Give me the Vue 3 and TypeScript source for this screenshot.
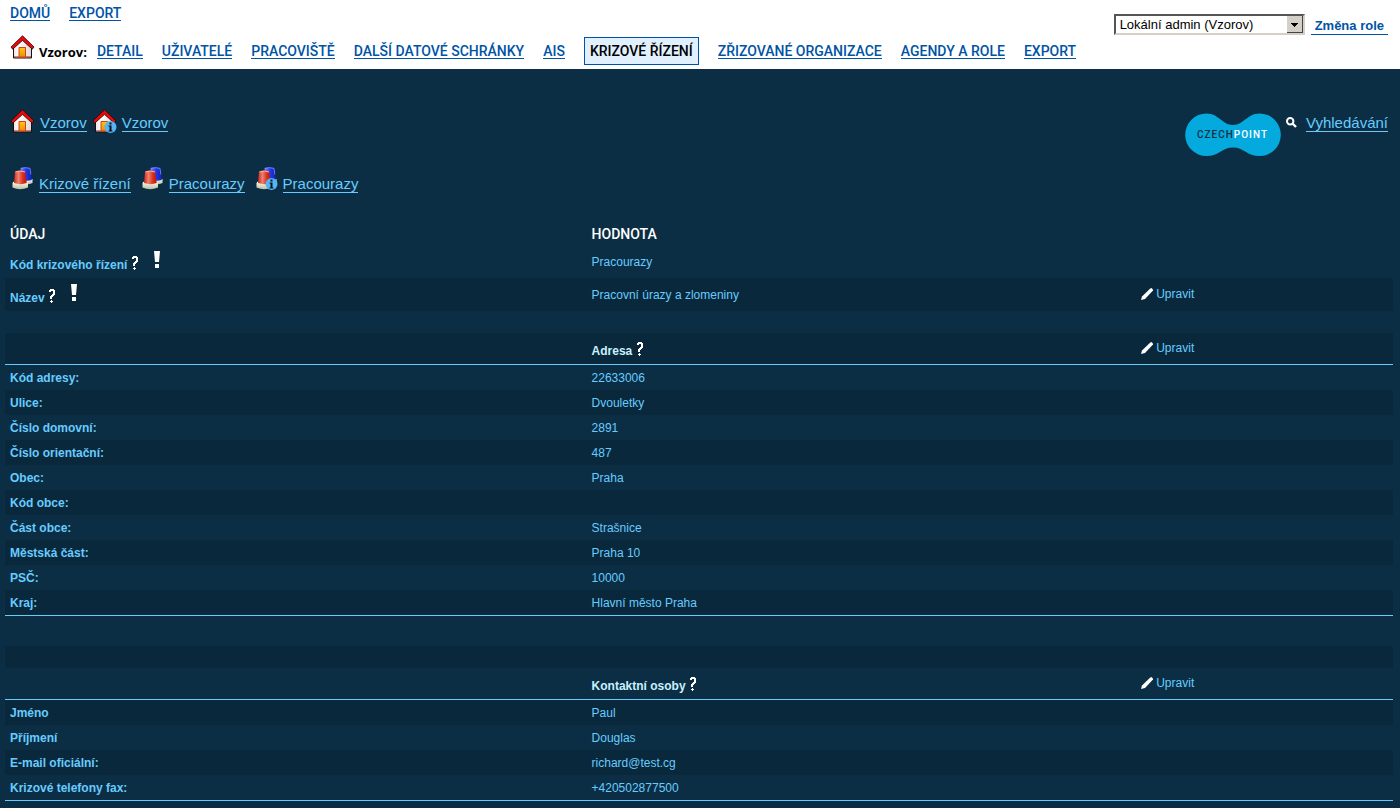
<script setup lang="ts">
import { ref } from 'vue'

interface NavItem { label: string; active?: boolean }
interface Row {
  kind: 'tall' | 'spacer' | 'gap' | 'group' | 'plain'
  label?: string
  value?: string
  edit?: boolean
  marks?: boolean
  last?: boolean
  dark?: boolean
}

const role = ref('Lokální admin (Vzorov)')

const topLinks: string[] = ['DOMŮ', 'EXPORT']
const nav: NavItem[] = [
  { label: 'DETAIL' },
  { label: 'UŽIVATELÉ' },
  { label: 'PRACOVIŠTĚ' },
  { label: 'DALŠÍ DATOVÉ SCHRÁNKY' },
  { label: 'AIS' },
  { label: 'KRIZOVÉ ŘÍZENÍ', active: true },
  { label: 'ZŘIZOVANÉ ORGANIZACE' },
  { label: 'AGENDY A ROLE' },
  { label: 'EXPORT' },
]

const rows: Row[] = [
  { kind: 'tall', label: 'Kód krizového řízení', value: 'Pracourazy', marks: true },
  { kind: 'tall', label: 'Název', value: 'Pracovní úrazy a zlomeniny', marks: true, edit: true, dark: true },
  { kind: 'spacer' },
  { kind: 'group', value: 'Adresa', edit: true, dark: true },
  { kind: 'plain', label: 'Kód adresy:', value: '22633006' },
  { kind: 'plain', label: 'Ulice:', value: 'Dvouletky', dark: true },
  { kind: 'plain', label: 'Číslo domovní:', value: '2891' },
  { kind: 'plain', label: 'Číslo orientační:', value: '487', dark: true },
  { kind: 'plain', label: 'Obec:', value: 'Praha' },
  { kind: 'plain', label: 'Kód obce:', value: '', dark: true },
  { kind: 'plain', label: 'Část obce:', value: 'Strašnice' },
  { kind: 'plain', label: 'Městská část:', value: 'Praha 10', dark: true },
  { kind: 'plain', label: 'PSČ:', value: '10000' },
  { kind: 'plain', label: 'Kraj:', value: 'Hlavní město Praha', dark: true, last: true },
  { kind: 'gap' },
  { kind: 'spacer', dark: true },
  { kind: 'group', value: 'Kontaktní osoby', edit: true },
  { kind: 'plain', label: 'Jméno', value: 'Paul', dark: true },
  { kind: 'plain', label: 'Příjmení', value: 'Douglas' },
  { kind: 'plain', label: 'E-mail oficiální:', value: 'richard@test.cg', dark: true },
  { kind: 'plain', label: 'Krizové telefony fax:', value: '+420502877500', last: true },
]
</script>

<template>
  <svg class="defs" width="0" height="0" aria-hidden="true">
    <defs>
      <linearGradient id="door" x1="0" y1="0" x2="0" y2="1">
        <stop offset="0" stop-color="#ffc61a" /><stop offset="1" stop-color="#f08c00" />
      </linearGradient>
      <linearGradient id="wall" x1="0" y1="0" x2="1" y2="0">
        <stop offset="0" stop-color="#f0e4e4" /><stop offset=".3" stop-color="#ffffff" /><stop offset="1" stop-color="#e4d4d4" />
      </linearGradient>
      <linearGradient id="red" x1="0" y1="0" x2="1" y2="0">
        <stop offset="0" stop-color="#c8281a" /><stop offset=".35" stop-color="#f08070" /><stop offset=".7" stop-color="#d8301c" /><stop offset="1" stop-color="#b81408" />
      </linearGradient>
      <linearGradient id="blue" x1="0" y1="0" x2="1" y2="0">
        <stop offset="0" stop-color="#6f8cff" /><stop offset=".5" stop-color="#2138e8" /><stop offset="1" stop-color="#1420b4" />
      </linearGradient>
      <linearGradient id="base" x1="0" y1="0" x2="0" y2="1">
        <stop offset="0" stop-color="#fffef2" /><stop offset="1" stop-color="#b9bfa0" />
      </linearGradient>
      <symbol id="house" viewBox="0 0 24 24">
        <path d="M3 12v11h18V12L12 4z" fill="url(#wall)" stroke="#1a0d0d" stroke-width="1" />
        <path d="M3.500 21.500h17v1h-17z" fill="#8c2418" />
        <path d="M8.500 12.500h6.500V22H8.500z" fill="url(#door)" stroke="#d0401a" />
        <path d="M12 .8L.5 12l1.700 2.200L12 5.400l9.800 8.800 1.700-2.200z" fill="#ea0a0a" stroke="#240404" stroke-width=".8" stroke-linejoin="round" />
      </symbol>
      <symbol id="info" viewBox="0 0 12 12">
        <circle cx="6" cy="6" r="6" fill="#56b4f5" />
        <path d="M5 1.500h2v2H5zM4 4.500h3v5h1v1H4v-1h1v-4H4z" fill="#06121c" />
      </symbol>
      <symbol id="beacon" viewBox="0 0 22 24">
        <path d="M12 13h8.500v4q-4 2-8.500 1z" fill="url(#base)" />
        <path d="M8.500 2q5-1.600 10 0L19.800 14q-5 1.500-9.800 0z" fill="url(#blue)" />
        <path d="M9 2.400q4.500-1.400 9 0l.8 6" stroke="#7a92ff" fill="none" stroke-width=".8" />
        <path d="M.5 17.500q0-2 2-2h11.500q2 0 2 2v4q-8 3.500-15.500 0z" fill="url(#base)" />
        <path d="M3 5.500q5-2.200 10.200 0L14.700 17q-6 2.300-12.700 0z" fill="url(#red)" />
        <path d="M3.500 6q5-1.800 9.500 0" stroke="#f9b0a4" fill="none" />
      </symbol>
      <symbol id="question" viewBox="0 0 8 14">
        <path d="M1 1h1V0h4v1h1v5H6v1H5v1H4v2H2V7h1V6h1V5h1V2H3v1H1zM2 12h1v-1h1v1h1v1H4v1H3v-1H2z" fill="#fff" />
      </symbol>
      <symbol id="bang" viewBox="0 0 6 17">
        <path d="M0 0h6L5 11H1zM1 13h4v4H1z" fill="#fff" />
      </symbol>
      <symbol id="pencil" viewBox="0 0 12 12">
        <path d="M0 12l1-3.500L9 .8 10.500 0 12 1.500v1L4 11z" fill="#fff" />
      </symbol>
    </defs>
  </svg>

  <header class="top">
    <div class="menus">
      <nav class="links" aria-label="Hlavní">
        <a v-for="l in topLinks" :key="l" href="#">{{ l }}</a>
      </nav>
      <nav class="links second" aria-label="Vzorov">
        <span class="home"><svg class="i24"><use href="#house" /></svg><b>Vzorov:</b></span>
        <a v-for="n in nav" :key="n.label" href="#" :class="{ active: n.active }">{{ n.label }}</a>
      </nav>
    </div>
    <form class="role" @submit.prevent>
      <select v-model="role" aria-label="Role">
        <option>Lokální admin (Vzorov)</option>
      </select>
      <button type="submit">Změna role</button>
    </form>
  </header>

  <main>
    <div class="crumbs">
      <div>
        <nav class="path houses" aria-label="Organizace">
          <svg class="i24"><use href="#house" /></svg><a href="#">Vzorov</a>
          <span class="stack"><svg class="i24"><use href="#house" /></svg><svg class="badge"><use href="#info" /></svg></span><a href="#">Vzorov</a>
        </nav>
        <nav class="path beacons" aria-label="Krizové řízení">
          <svg class="b24"><use href="#beacon" /></svg><a href="#">Krizové řízení</a>
          <svg class="b24"><use href="#beacon" /></svg><a href="#">Pracourazy</a>
          <span class="stack"><svg class="b24"><use href="#beacon" /></svg><svg class="badge"><use href="#info" /></svg></span><a href="#">Pracourazy</a>
        </nav>
      </div>
      <div class="search">
        <svg class="logo" viewBox="0 0 96 44" role="img" aria-label="CzechPoint">
          <path d="M21.500 0.500C34 0.500 37 12 48 12S62 0.500 74.500 0.500a21.300 21.300 0 0 1 0 42.600C62 43.100 59 34.500 48 34.500S34 43.100 21.500 43.100a21.300 21.300 0 0 1 0-42.600z" fill="#04aadd" />
          <text x="12" y="25" class="logo-text"><tspan fill="#12303f">CZECH</tspan><tspan fill="#fff">POINT</tspan></text>
        </svg>
        <svg class="lens" viewBox="0 0 11 11"><circle cx="4.200" cy="4.200" r="3.200" fill="none" stroke="#fff" stroke-width="2" /><path d="M6.500 6.500L10 10" stroke="#fff" stroke-width="2.400" /></svg>
        <a href="#">Vyhledávání</a>
      </div>
    </div>

    <table>
      <colgroup><col class="c1" /><col class="c2" /><col /></colgroup>
      <thead>
        <tr><th scope="col">ÚDAJ</th><th scope="col">HODNOTA</th><td></td></tr>
      </thead>
      <tbody>
        <tr v-for="(r, i) in rows" :key="i" :class="[r.kind, { dark: r.dark, last: r.last }]">
          <th v-if="r.label" scope="row">
            {{ r.label }}
            <template v-if="r.marks"><svg class="question"><use href="#question" /></svg><svg class="bang"><use href="#bang" /></svg></template>
          </th>
          <td v-else></td>
          <td :class="{ title: r.kind === 'group' }">
            {{ r.value }}
            <svg v-if="r.kind === 'group'" class="question"><use href="#question" /></svg>
          </td>
          <td><a v-if="r.edit" href="#" class="edit"><svg class="pencil"><use href="#pencil" /></svg>Upravit</a></td>
        </tr>
      </tbody>
    </table>
  </main>
</template>

<style>
body { background: #0c2e44; }
</style>

<style scoped>
.defs { position: absolute; }
.top {
  display: flex;
  justify-content: space-between;
  align-items: flex-start;
  box-sizing: border-box;
  min-height: 69px;
  padding: 0 12px 0 10px;
  background: #fff;
}
.links {
  display: flex;
  align-items: center;
  gap: 19px;
  height: 26px;
  font: 500 14px/14px "Roboto", sans-serif;
}
.links a {
  color: #0054a6;
  text-decoration: none;
  border-bottom: 1px solid #0054a6;
  white-space: nowrap;
}
.second { box-sizing: border-box; height: 43px; padding-top: 7px; }
.second a.active {
  padding: 6px 5px;
  color: #000;
  background: #e1f0ff;
  border: 1px solid #0054a6;
}
.home { display: flex; align-items: flex-end; gap: 4px; margin-right: -9px; padding-bottom: 8px; color: #000; }
.home b { font: 700 13px/14px "Open Sans", sans-serif; }
.i24 { display: block; width: 25px; height: 24px; }
.role {
  display: flex;
  align-items: flex-start;
  gap: 6px;
  padding-top: 14px;
}
select {
  appearance: none;
  box-sizing: border-box;
  width: 191px;
  height: 21px;
  padding: 0 20px 0 4px;
  border: 2px solid;
  border-color: #555 #d4d0c8 #d4d0c8 #555;
  border-radius: 0;
  color: #000;
  font: 13px/17px "Liberation Sans", Arial, sans-serif;
  background:
    linear-gradient(#000, #000) right 5px top 7px / 7px 1px no-repeat,
    linear-gradient(#000, #000) right 6px top 8px / 5px 1px no-repeat,
    linear-gradient(#000, #000) right 7px top 9px / 3px 1px no-repeat,
    linear-gradient(#000, #000) right 8px top 10px / 1px 1px no-repeat,
    linear-gradient(#444, #444) right 0 top 0 / 1px 17px no-repeat,
    linear-gradient(#444, #444) right 0 bottom 0 / 16px 1px no-repeat,
    linear-gradient(#d4d0c8, #d4d0c8) right 0 top 0 / 16px 17px no-repeat,
    #fff;
}
button {
  margin: 3px 0 0;
  padding: 0 4px;
  border: 0;
  border-bottom: 1px solid #0054a6;
  background: none;
  color: #0054a6;
  font: bold 13px/17px "Liberation Sans", Arial, sans-serif;
}
main { font: 12px/14px "Liberation Sans", Arial, sans-serif; color: #6cf; }
main a { color: #6cf; }
.crumbs {
  display: flex;
  justify-content: space-between;
  padding: 40px 12px 0 10px;
  font-size: 15px;
}
.path { display: flex; align-items: flex-start; }
.path a, .search a { line-height: 17px; text-decoration: none; border-bottom: 1px solid #6cf; }
.path a { margin-right: 5px; margin-left: 5px; }
.houses { height: 57px; }
.houses a { margin-top: 5px; }
.beacons a { margin-top: 9px; margin-right: 9px; }
.stack { position: relative; }
.badge { position: absolute; right: 0; bottom: 0; width: 13px; height: 12px; }
.b24 { display: block; width: 22px; height: 24px; margin-left: 2px; }
.search { display: flex; align-items: flex-start; padding-top: 4px; }
.search a { margin-top: 1px; }
.logo { width: 96px; height: 44px; margin-right: 5px; }
.logo-text { font: 500 10px "Roboto", sans-serif; letter-spacing: 1px; }
.lens { width: 11px; height: 11px; margin: 4px 9px 0 0; }
table {
  width: calc(100% - 12px);
  margin: 29px 7px 0 5px;
  border-collapse: separate;
  border-spacing: 0;
  table-layout: fixed;
}
.c1 { width: 41.9%; }
.c2 { width: 39.6%; }
th, td { padding: 0 5px; text-align: left; vertical-align: middle; }
thead th { height: 23px; color: #fff; font: 500 14px/18px "Roboto", sans-serif; }
.dark { background: #0a283b; }
.tall > * { height: 33px; }
.spacer > * { height: 22px; }
.gap > * { height: 30px; }
.group > * { height: 31px; border-bottom: 1px solid #6cf; }
.plain > * { height: 25px; }
.last > * { border-bottom: 1px solid #6cf; }
.title { color: #c8f0ff; font-weight: bold; }
.group > .title { padding-top: 2px; height: 29px; }
.question { width: 8px; height: 14px; vertical-align: -1px; }
.bang { width: 6px; height: 17px; margin-left: 15px; vertical-align: 1px; }
.edit { display: inline-flex; align-items: center; gap: 3px; text-decoration: none; }
.pencil { width: 12px; height: 12px; }
</style>
